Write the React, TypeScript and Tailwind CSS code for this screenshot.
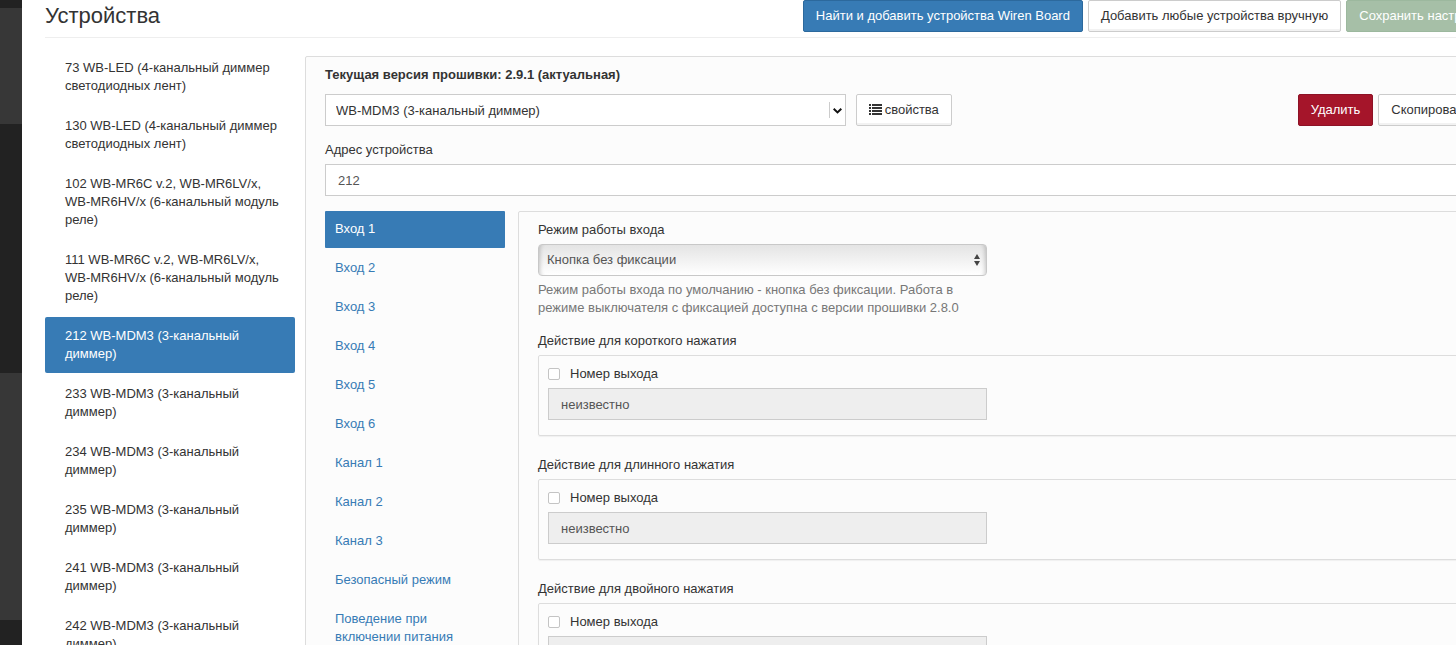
import { useState } from "react"
import type { ReactNode } from "react"
import clsx from "clsx"

const devices = [
  { address: 73, model: "WB-LED (4-канальный диммер светодиодных лент)" },
  { address: 130, model: "WB-LED (4-канальный диммер светодиодных лент)" },
  { address: 102, model: "WB-MR6C v.2, WB-MR6LV/x, WB-MR6HV/x (6-канальный модуль реле)" },
  { address: 111, model: "WB-MR6C v.2, WB-MR6LV/x, WB-MR6HV/x (6-канальный модуль реле)" },
  { address: 212, model: "WB-MDM3 (3-канальный диммер)" },
  { address: 233, model: "WB-MDM3 (3-канальный диммер)" },
  { address: 234, model: "WB-MDM3 (3-канальный диммер)" },
  { address: 235, model: "WB-MDM3 (3-канальный диммер)" },
  { address: 241, model: "WB-MDM3 (3-канальный диммер)" },
  { address: 242, model: "WB-MDM3 (3-канальный диммер)" },
]

const sections = [
  "Вход 1",
  "Вход 2",
  "Вход 3",
  "Вход 4",
  "Вход 5",
  "Вход 6",
  "Канал 1",
  "Канал 2",
  "Канал 3",
  "Безопасный режим",
  "Поведение при включении питания",
]

const actions = [
  { id: "short", title: "Действие для короткого нажатия" },
  { id: "long", title: "Действие для длинного нажатия" },
  { id: "double", title: "Действие для двойного нажатия" },
]

const buttonStyles = {
  primary: "border-[#2c699d] bg-[#377bb5] text-white",
  default: "border-[#cccccc] bg-white text-[#333333] shadow-[inset_0_-2px_0_rgba(0,0,0,0.05)]",
  danger: "border-[#8d1226] bg-[#a5152a] text-white",
  success: "border-[#9cb89e] bg-[#a6bfa7] text-white",
}

function Button({ kind = "default", children }: { kind?: keyof typeof buttonStyles; children: ReactNode }) {
  return (
    <button
      type="button"
      className={clsx(
        "flex h-8 shrink-0 items-center gap-[3px] whitespace-nowrap rounded-[2px] border px-3",
        buttonStyles[kind],
      )}
    >
      {children}
    </button>
  )
}

function ListIcon() {
  return (
    <svg width="13" height="12" viewBox="0 0 13 12" fill="currentColor" aria-hidden="true">
      <path d="M0 0h2v2H0zM3 0h10v2H3zM0 3h2v2H0zM3 3h10v2H3zM0 6h2v2H0zM3 6h10v2H3zM0 9h2v2H0zM3 9h10v2H3z" />
    </svg>
  )
}

// Narrow strip of the collapsed main menu
function MenuStrip() {
  return (
    <div className="flex w-[22px] shrink-0 flex-col bg-[#222222]">
      <div className="mt-2 h-[116px] bg-[#373737]" />
      <div className="mt-[249px] h-[247px] bg-[#373737]" />
    </div>
  )
}

function DeviceList() {
  const [selected, setSelected] = useState(212)

  return (
    <nav className="-mt-[7px] w-[250px] shrink-0">
      <ul className="flex flex-col gap-0.5">
        {devices.map(({ address, model }) => (
          <li key={address}>
            <a
              href={`#device-${address}`}
              onClick={() => setSelected(address)}
              className={clsx(
                "block rounded-[2px] py-2.5 pr-[15px] pl-5",
                address === selected ? "bg-[#377bb5] text-white" : "text-[#333333]",
              )}
            >
              {`${address} ${model}`}
            </a>
          </li>
        ))}
      </ul>
    </nav>
  )
}

function SectionTabs() {
  const [active, setActive] = useState(sections[0])

  return (
    <nav className="w-[180px] shrink-0">
      <ul className="flex flex-col gap-0.5">
        {sections.map((name, i) => (
          <li key={name}>
            <a
              href={`#section-${i + 1}`}
              onClick={() => setActive(name)}
              className={clsx(
                "block rounded-[1px] px-2.5 pt-[9px] pb-2.5",
                name === active ? "bg-[#377bb5] text-white" : "text-[#377bb5]",
              )}
            >
              {name}
            </a>
          </li>
        ))}
      </ul>
    </nav>
  )
}

function ActionBlock({ id, title }: { id: string; title: string }) {
  return (
    <fieldset className="mb-5">
      <legend className="mb-[5px]">{title}</legend>
      <div className="rounded-[2px] border border-[#dddddd] px-[9px] pt-[9px] pb-[15px] shadow-[0_1px_1px_rgba(0,0,0,0.05)]">
        <div className="mb-[5px] flex items-center gap-2.5">
          <input
            type="checkbox"
            id={`${id}-enabled`}
            className="size-3 appearance-none rounded-[2px] border border-[#c4c4c4] bg-white checked:bg-[#377bb5]"
          />
          <label htmlFor={`${id}-enabled`}>Номер выхода</label>
        </div>
        <input
          type="text"
          aria-label={title}
          disabled
          value="неизвестно"
          className="block h-8 w-[439px] max-w-full border border-[#cccccc] bg-[#eeeeee] px-3 text-[#555555]"
        />
      </div>
    </fieldset>
  )
}

function InputSettings() {
  return (
    <div className="min-w-0 flex-1 rounded-[2px] border border-[#dddddd] px-[19px] pt-[9px]">
      <label htmlFor="input-mode" className="mb-[5px] block">
        Режим работы входа
      </label>
      <div className="relative w-[449px] max-w-full">
        <select
          id="input-mode"
          className="block h-8 w-full appearance-none rounded-[4px] border border-[#c8c8c8] bg-linear-to-b from-[#e4e4e4] to-white px-2 text-[#555555] shadow-[inset_5px_0_4px_-4px_rgba(0,0,0,0.2),inset_-5px_0_4px_-4px_rgba(0,0,0,0.2)]"
        >
          <option>Кнопка без фиксации</option>
          <option>Выключатель с фиксацией</option>
        </select>
        <svg
          width="6"
          height="12"
          viewBox="0 0 6 12"
          fill="#444444"
          aria-hidden="true"
          className="pointer-events-none absolute top-2.5 right-[7px]"
        >
          <path d="M3 0l3 5H0zM3 12L0 7h6z" />
        </svg>
      </div>
      <p className="mt-[5px] mb-[15px] w-[449px] max-w-full text-[#777777]">
        Режим работы входа по умолчанию - кнопка без фиксации. Работа в режиме выключателя с фиксацией доступна с версии
        прошивки 2.8.0
      </p>
      {actions.map((action) => (
        <ActionBlock key={action.id} {...action} />
      ))}
    </div>
  )
}

function DevicePanel() {
  return (
    <section className="min-w-0 flex-1 rounded-[2px] border border-[#dddddd] bg-[#fcfcfc] px-[19px] pt-[9px]">
      <h2 className="mb-2.5 font-bold">Текущая версия прошивки: 2.9.1 (актуальная)</h2>
      <div className="flex items-center gap-2.5">
        <div className="relative w-[45%]">
          <select
            aria-label="Модель устройства"
            className="block h-8 w-full appearance-none border border-[#cccccc] bg-white px-2.5 pt-0.5 text-[#333333]"
          >
            <option>WB-MDM3 (3-канальный диммер)</option>
            <option>WB-LED (4-канальный диммер светодиодных лент)</option>
          </select>
          <div className="pointer-events-none absolute inset-y-2 right-1 flex items-center border-l border-[#cccccc] pt-0.5 pl-[3px]">
            <svg width="9" height="6" viewBox="0 0 9 6" fill="none" stroke="#111111" strokeWidth="2" aria-hidden="true">
              <path d="M0.7 0.8l3.8 3.6 3.8-3.6" />
            </svg>
          </div>
        </div>
        <Button>
          <ListIcon />
          свойства
        </Button>
        <div className="ml-auto flex gap-[5px]">
          <Button kind="danger">Удалить</Button>
          <Button>Скопировать</Button>
        </div>
      </div>
      <label htmlFor="address" className="mt-[15px] mb-[5px] block">
        Адрес устройства
      </label>
      <input
        id="address"
        type="text"
        defaultValue="212"
        className="block h-8 w-full border border-[#cccccc] bg-white px-3 text-[#555555]"
      />
      <div className="mt-[15px] flex gap-[13px]">
        <SectionTabs />
        <InputSettings />
      </div>
    </section>
  )
}

export default function App() {
  return (
    <div className="flex h-screen overflow-hidden bg-white font-['Liberation_Sans',Arial,sans-serif] text-[13px] leading-[18px] text-[#333333]">
      <MenuStrip />
      {/* the content is wider than the window and runs off its right edge */}
      <main className="-mr-[46px] min-w-0 flex-1 pl-[23px]">
        <header className="mb-[18px] flex h-[38px] items-start justify-between border-b border-[#eeeeee]">
          <h1 className="text-[22px] leading-8">Устройства</h1>
          <div className="flex gap-[5px]">
            <Button kind="primary">Найти и добавить устройства Wiren Board</Button>
            <Button>Добавить любые устройства вручную</Button>
            <Button kind="success">Сохранить настройки</Button>
          </div>
        </header>
        <div className="flex gap-2.5">
          <DeviceList />
          <DevicePanel />
        </div>
      </main>
    </div>
  )
}
